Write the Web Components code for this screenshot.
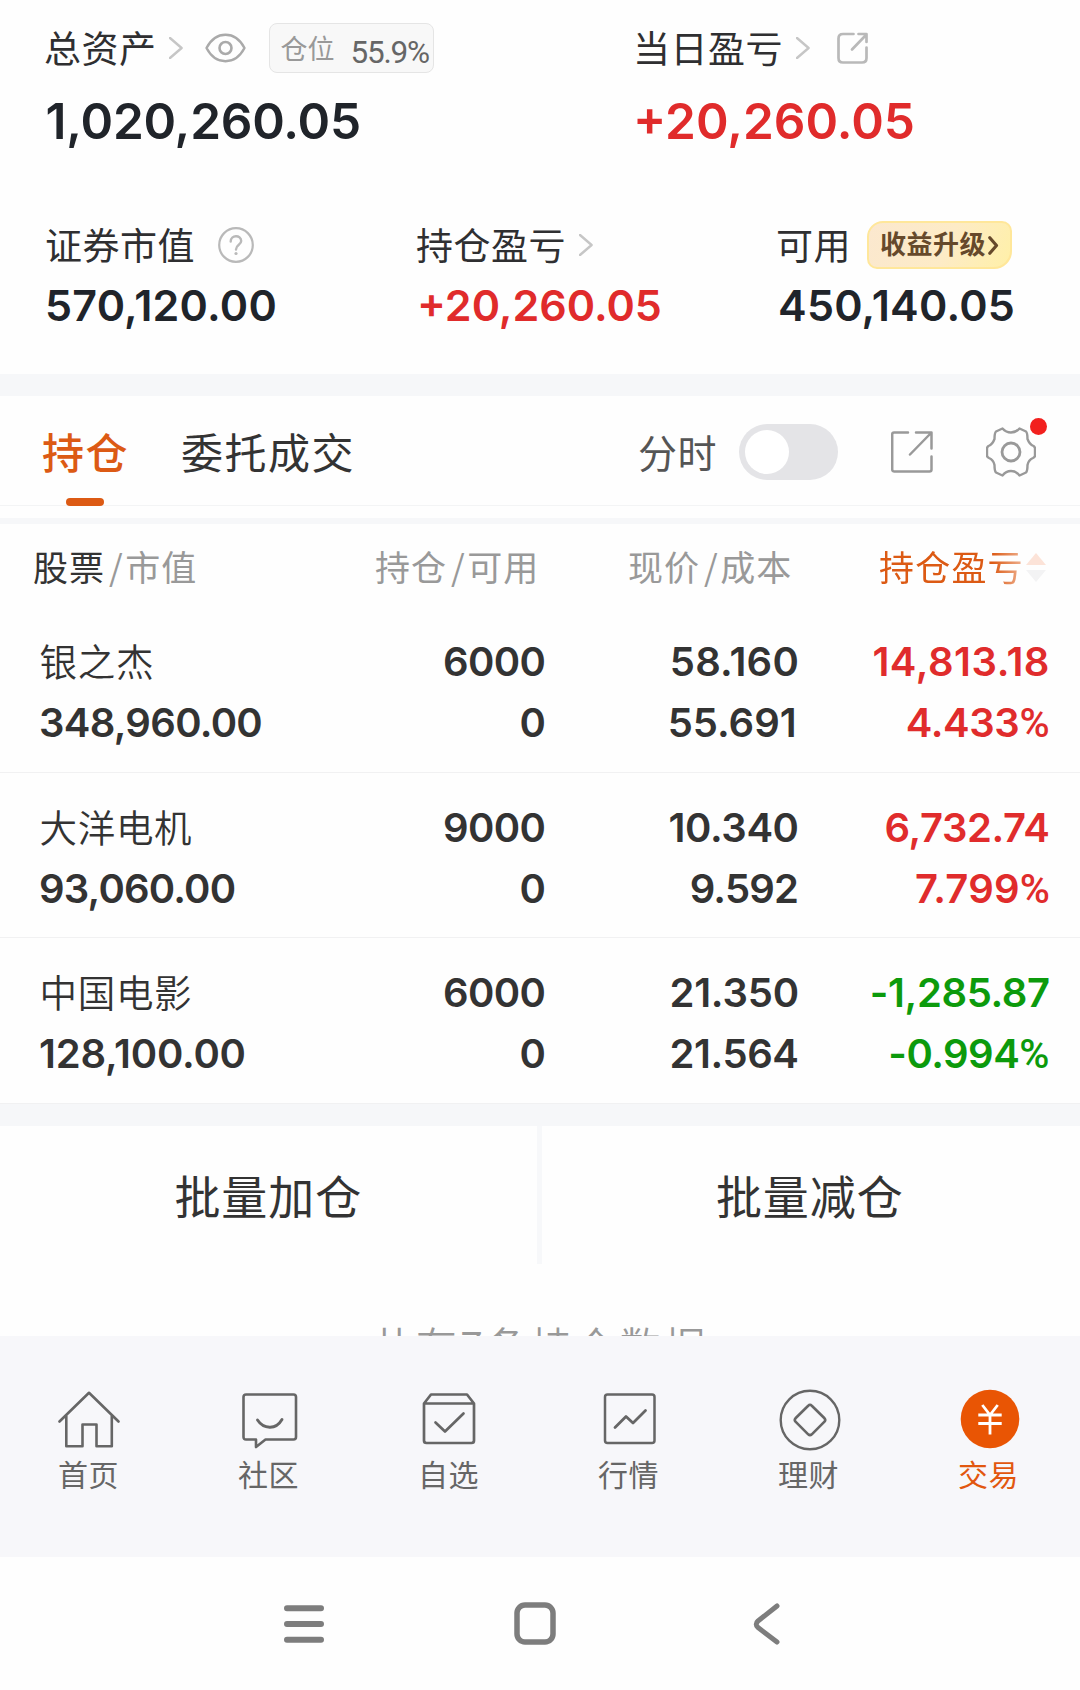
<!DOCTYPE html>
<html lang="zh-CN">
<head>
<meta charset="utf-8">
<title>持仓</title>
<style>
html,body{margin:0;padding:0;background:#fefefe}
body{width:1080px;height:1690px;overflow:hidden;font-family:"Noto Sans CJK SC",sans-serif;color:#333}
</style>
</head>
<body>
<trade-page></trade-page>
<script>
const ICONS = {
  chevron: [14, 22, '<path d="M1 1 12.6 11 1 21" stroke="#c6c6c6" stroke-width="2.4"/>'],
  eye: [41, 30, '<path d="M1.5 15C6 6.500 12 1.800 20.500 1.800S35 6.500 39.500 15C35 23.500 29 28.200 20.500 28.200S6 23.500 1.500 15Z" stroke-width="2.4"/><circle cx="20.500" cy="15" r="6" stroke-width="2.6"/>'],
  share: [31, 32, '<path d="M16.500 2H6Q1.500 2 1.500 6.500V26Q1.500 30.500 6 30.500H25Q29.500 30.500 29.500 26V15.500M15 17.500 29 3M21.500 2H29.500V10" stroke-width="2.7"/>'],
  help: [36, 36, '<circle cx="18" cy="18" r="16.800" stroke-width="2.200"/><path d="M12.700 14.500C12.700 7.500 23.200 7.500 23.200 14C23.200 18 18 17.500 18 22.500" stroke-width="2.4"/><circle cx="18" cy="26.500" r="1.600" fill="currentColor" stroke="none"/>'],
  promo: [11, 19, '<path d="M1.800 1.800 8.500 9.500 1.800 17.200" stroke-width="3.200"/>'],
  export: [42, 42, '<path d="M17 1.500H3Q1.200 1.500 1.200 3.300V38.500Q1.200 40.500 3 40.500H38.500Q40.500 40.500 40.500 38.500V25.500M19 23.500 40 2M25 1.500H40.500V17.500" stroke-width="2.500"/>'],
  gear: [50, 50, '<path d="M16.500 1.500Q20 5.500 25 5.500T33.500 1.500L40 4.500Q41.500 6 41.500 12Q43.500 17.500 47.500 19Q49 20 49 21.500V28.500Q49 30 47 31Q42.500 33 41.500 38Q41.500 44 40 45.500L33.500 48.500Q30 44 25 44T16.500 48.500L10 45.500Q8.500 44 8.500 38Q7.500 33 3 31Q1 30 1 28.500V21.500Q1 20 2.500 19Q6.500 17.500 8.500 12Q8.500 6 10 4.500Z" stroke-width="2.400"/><circle cx="25" cy="25" r="9" stroke-width="2.800"/>'],
  home: [62, 58, '<path d="M1.500 30.500 31 1.800 60.500 30.500M8.300 25V55.300H24.500V33.500H38.500V55.300H53.800V25" stroke-width="2.600"/>'],
  chat: [56, 58, '<path d="M4 3.500H51.500Q54 3.500 54 6V46Q54 48.500 51.500 48.500H23.500L14 56V48.500H4Q1.500 48.500 1.500 46V6Q1.500 3.500 4 3.500Z" stroke-width="2.600"/><path d="M15.500 29Q20 36 27.700 36.200T40 28.500" stroke-width="2.900"/>'],
  box: [54, 58, '<path d="M2 12.500 9 3.500H45L52 12.500V49.500Q52 52 49.500 52H4.500Q2 52 2 49.500ZM2 12.500H52M13.500 31.500 23 40.500 41.500 22.500" stroke-width="2.700"/>'],
  chart: [54, 58, '<rect x="2" y="3.500" width="49.500" height="48.500" rx="2.500" stroke-width="2.500"/><path d="M12 36.500 23 25.500 30 32 42.500 19.500" stroke-width="2.800"/>'],
  coin: [62, 62, '<circle cx="31" cy="31" r="29.300" stroke-width="2.400"/><path d="M29.200 16.800Q31 14.800 32.800 16.800L45.500 29.300Q47 31 45.500 32.700L32.800 45.300Q31 47 29.200 45.300L16.500 32.700Q15 31 16.500 29.300Z" stroke-width="2.600"/>'],
  yen: [60, 60, '<circle cx="30" cy="30" r="29.300" fill="#e95504" stroke="none"/><path d="M22.300 16 30 26 37.700 16M18.300 26H41.700M18.300 34.500H41.700M30 26V45.500" stroke="#fff" stroke-width="2.800" stroke-linecap="butt"/>'],
  menu: [40, 42, '<path d="M3 5.300H37M3 21H37M3 36.700H37" stroke-width="6"/>'],
  square: [42, 43, '<rect x="3" y="3" width="36" height="37" rx="8" stroke-width="5.500"/>'],
  back: [27, 42, '<path d="M24 3 5 18Q1.500 21 5 24.500L24 39" stroke-width="5"/>']
};
const define = (name, html) => customElements.define(name, class extends HTMLElement {
  connectedCallback() {
    if (this.shadowRoot) return;
    const root = this.attachShadow({mode: 'open'});
    root.innerHTML = typeof html === 'function' ? html(this) : html;
  }
});

define('line-icon', el => {
  const [w, h, body] = ICONS[el.getAttribute('name')];
  return `<style>:host{display:block;flex:none;width:${w}px;height:${h}px}svg{display:block}</style>
  <svg width="${w}" height="${h}" viewBox="0 0 ${w} ${h}" fill="none" stroke="currentColor" stroke-linecap="round" stroke-linejoin="round">${body}</svg>`;
});

define('stat-block', `<style>
  :host{display:flex;flex-direction:column;color:#2f2f31}
  .label{display:flex;align-items:center;height:50px;font-size:37px;letter-spacing:.5px;line-height:44px;white-space:nowrap}
  .label span{margin-bottom:3px}
  .value{font-family:Inter,sans-serif;font-weight:600;font-size:var(--num,43px);line-height:var(--numline,50px);margin:var(--gap,10px) 0 0 var(--nx,0px);letter-spacing:var(--ls,0px);color:var(--value,#20242a);white-space:nowrap}
  ::slotted(line-icon){color:#b9b9b9}
  </style><div class="label"><span><slot name="label"></slot></span><slot name="extra"></slot></div><div class="value"><slot></slot></div>`);

define('position-badge', `<style>
  :host{display:flex;box-sizing:border-box;width:165px;height:50px;border:1.500px solid #e5e5e5;border-radius:8px;background:#f8f8f8;align-items:center;padding-left:11px;letter-spacing:0}
  .t{font-size:27px;line-height:30px;color:#999;margin-bottom:0}
  .v{font-family:Roboto,sans-serif;font-size:31.500px;line-height:34px;color:#666;margin:10px 0 0 16px;letter-spacing:-1.200px}
  </style><span class="t"><slot></slot></span><span class="v"><slot name="value"></slot></span>`);

define('promo-badge', `<style>
  :host{display:flex;box-sizing:border-box;width:145px;height:48px;align-items:center;padding-left:11px;color:#66492b;border:2px solid #ffe79a;border-radius:16px 10px 18px 10px;background:linear-gradient(115deg,#fbe8cf,#fdebc6 55%,#fff0a8);font-size:26px;font-weight:700;letter-spacing:.5px}
  span{line-height:30px;margin:0 2px 4px 0}
  </style><span><slot></slot></span><line-icon name="promo"></line-icon>`);

define('toggle-switch', `<style>
  :host{display:block;box-sizing:border-box;width:99px;height:56px;border-radius:28px;background:#e4e4e7;padding:6px}
  i{display:block;width:44px;height:44px;border-radius:50%;background:#fff}
  </style><i></i>`);

define('tab-bar', `<style>
  :host{display:flex;box-sizing:border-box;height:110px;align-items:flex-start;border-bottom:1px solid #f3f4f5;font-size:42px;letter-spacing:1.500px;line-height:60px;color:#333}
  .on{margin:24.500px 0 0 42px;width:84px;color:#dc5a14;font-weight:500;white-space:nowrap}
  .on i{display:block;width:38px;height:8px;border-radius:4px;margin:17.500px 0 0 24px;background:#dc5a14}
  .off{margin:24.500px 0 0 55px;width:457px}
  .mode{font-size:39px;letter-spacing:.4px;color:#555;margin:24.500px 0 0 0;width:101px}
  toggle-switch{margin-top:28px}
  .ex{margin:35px 0 0 53px;color:#999}
  .gear{position:relative;margin:31px 0 0 53px;color:#999}
  .gear i{position:absolute;left:44px;top:-9px;width:17px;height:17px;border-radius:50%;background:#f2201e}
  </style><div class="on">持仓<i></i></div><div class="off">委托成交</div><div class="mode">分时</div><toggle-switch></toggle-switch>
  <line-icon class="ex" name="export"></line-icon><div class="gear"><line-icon name="gear"></line-icon><i></i></div>`);

define('table-head', `<style>
  :host{display:grid;grid-template-columns:342px 253px 251px 1fr;box-sizing:border-box;height:83px;padding:1px 0 0 33px;align-items:center;font-size:35px;line-height:50px;letter-spacing:1px;color:#999;white-space:nowrap}
  b{font-weight:400;color:#333}
  s{text-decoration:none;margin:0 1.500px 0 4px}
  .sort{display:flex;align-items:center;color:#dc5a14;letter-spacing:1.200px}
  .sort span{-webkit-mask-image:linear-gradient(90deg,#000 78%,rgba(0,0,0,.45));mask-image:linear-gradient(90deg,#000 78%,rgba(0,0,0,.45))}
  svg{margin:2px 0 0 2px}
  </style><div><b>股票</b><s>/</s>市值</div><div>持仓<s>/</s>可用</div><div>现价<s>/</s>成本</div>
  <div class="sort"><span>持仓盈亏</span><svg width="20" height="30"><path d="M10 1 20 13H0Z" fill="#fce3d8"/><path d="M0 18H20L10 30Z" fill="#f3f3f4"/></svg></div>`);

const figure = (raw, cls = '') => {
  const [text, ls = '-.6', inset = 0] = raw.split('~');
  const pad = cls === 'l' ? 0 : Math.max(0, -ls) + +inset;
  return `<div class="${cls}" style="letter-spacing:${ls}px;padding-right:${pad}px">${text.replace('%', '<em>%</em>')}</div>`;
};
define('holding-row', el => {
  const d = el.getAttribute('data').split('|');
  const tone = d[6].startsWith('-') ? 'down' : 'up';
  return `<style>
  :host{display:grid;grid-template-columns:300px 207px 253px 251px;grid-template-rows:61px 61px;box-sizing:border-box;height:165.500px;padding:24px 0 0 39px;border-bottom:1.500px solid #f1f1f2;font:600 40px/61px Inter,sans-serif;color:#333;text-align:right;white-space:nowrap}
  .l{text-align:left}
  .n{text-align:left;font:350 37.500px/58px "Noto Sans CJK SC","Noto Sans CJK SC DemiLight",sans-serif;letter-spacing:.7px;padding-left:.5px}
  em{font:500 41px/50px Roboto,sans-serif;letter-spacing:0}
  .down{color:#0c9a0c}
  .up{color:#e02c2c}
  </style><div class="n">${d[0]}</div>${figure(d[2])}${figure(d[4])}${figure(d[6], tone)}
  ${figure(d[1], 'l')}${figure(d[3])}${figure(d[5])}${figure(d[7], tone)}`;
});

define('batch-actions', `<style>
  :host{display:flex;height:138px;font-size:46px;letter-spacing:.9px;color:#333}
  div{flex:1;box-sizing:border-box;text-align:center;line-height:68px;padding-top:33.500px}
  div:first-child{flex:none;width:539px;padding-right:3px}
  div:last-child{padding-right:2px}
  i{width:5px;background:#f7f8fa}
  </style><div>批量加仓</div><i></i><div>批量减仓</div>`);

define('nav-item', el => `<style>
  :host{display:flex;flex-direction:column;align-items:center;flex:1;color:#666}
  :host([active]){color:#e2570f}
  .i{height:62px;display:flex;align-items:flex-start;margin-left:${/home|box/.test(el.getAttribute('icon')) ? -2 : -1}px}
  .i line-icon{margin-top:${/coin|yen/.test(el.getAttribute('icon')) ? 0 : 2}px}
  .t{font-size:30px;line-height:40px;letter-spacing:.5px;margin:2.500px 3px 0 0}
  </style><div class="i"><line-icon name="${el.getAttribute('icon')}"></line-icon></div><div class="t"><slot></slot></div>`);

define('bottom-nav', `<style>
  :host{display:flex;box-sizing:border-box;height:221px;padding-top:53px;background:#f7f7fa}
  </style><nav-item icon="home">首页</nav-item><nav-item icon="chat">社区</nav-item><nav-item icon="box">自选</nav-item><nav-item icon="chart">行情</nav-item><nav-item icon="coin">理财</nav-item><nav-item icon="yen" active>交易</nav-item>`);

define('system-bar', `<style>
  :host{display:flex;box-sizing:border-box;align-items:center;height:133.500px;padding:1px 0 0 284px;color:#7d7d7d}
  .s{margin-left:190px}.b{margin-left:197px}
  </style><line-icon name="menu"></line-icon><line-icon class="s" name="square"></line-icon><line-icon class="b" name="back"></line-icon>`);

define('trade-page', `<style>
  :host{display:flex;flex-direction:column;width:1080px;height:1690px;background:#fefefe}
  :host>*{flex:none}
  .summary{height:351px;padding-top:23px}
  .row{display:flex;padding-left:45px}
  .top{padding-left:44px;--num:49.500px;--numline:60px;--gap:18px}
  .top stat-block:first-child{width:589px;--ls:-.2px;--nx:1.500px}
  .sub{margin-top:69px}
  .sub stat-block:nth-child(1){width:370px;--ls:.24px}
  .sub stat-block:nth-child(2){width:361px;--nx:2px}
  .sub stat-block:nth-child(3){--nx:2px;--ls:.24px}
  .red{--value:#e02b2b}
  .band{background:#f6f7f9}
  .more{height:71.500px;overflow:hidden;text-align:center;font-size:41px;letter-spacing:3.500px;line-height:56px;color:#999;font-weight:350}
  .more div{padding-top:51.500px}
  </style>
  <div class="summary">
    <div class="row top">
      <stat-block><span slot="label">总资产</span><line-icon slot="extra" name="chevron" style="margin-left:12px"></line-icon><line-icon slot="extra" name="eye" style="margin-left:22px;color:#aaa"></line-icon><position-badge slot="extra" style="margin-left:23px">仓位<span slot="value">55.9%</span></position-badge>1,020,260.05</stat-block>
      <stat-block class="red"><span slot="label">当日盈亏</span><line-icon slot="extra" name="chevron" style="margin-left:13px"></line-icon><line-icon slot="extra" name="share" style="margin-left:27px"></line-icon>+20,260.05</stat-block>
    </div>
    <div class="row sub">
      <stat-block><span slot="label">证券市值</span><line-icon slot="extra" name="help" style="margin-left:23px"></line-icon>570,120.00</stat-block>
      <stat-block class="red"><span slot="label" style="margin-left:1px">持仓盈亏</span><line-icon slot="extra" name="chevron" style="margin-left:13px"></line-icon>+20,260.05</stat-block>
      <stat-block><span slot="label">可用</span><promo-badge slot="extra" style="margin-left:16px">收益升级</promo-badge>450,140.05</stat-block>
    </div>
  </div>
  <div class="band" style="height:22px"></div>
  <tab-bar></tab-bar>
  <div class="band" style="height:6px;margin-top:12px"></div>
  <table-head></table-head>
  <holding-row data="银之杰|348,960.00~-.7|6000|0~0|58.160~.2|55.691~0~2.3|14,813.18~.54|4.433%~-.4"></holding-row>
  <holding-row data="大洋电机|93,060.00~-.8|9000|0~0|10.340~-.4|9.592~-.8|6,732.74~-.4|7.799%~.2"></holding-row>
  <holding-row data="中国电影|128,100.00~-.2|6000|0~0|21.350~-.2|21.564~-.4|-1,285.87~-.4|-0.994%~-.5"></holding-row>
  <div class="band" style="height:22.500px"></div>
  <batch-actions></batch-actions>
  <div class="more"><div>共有7条持仓数据</div></div>
  <bottom-nav></bottom-nav>
  <system-bar></system-bar>`);
</script>
</body>
</html>
